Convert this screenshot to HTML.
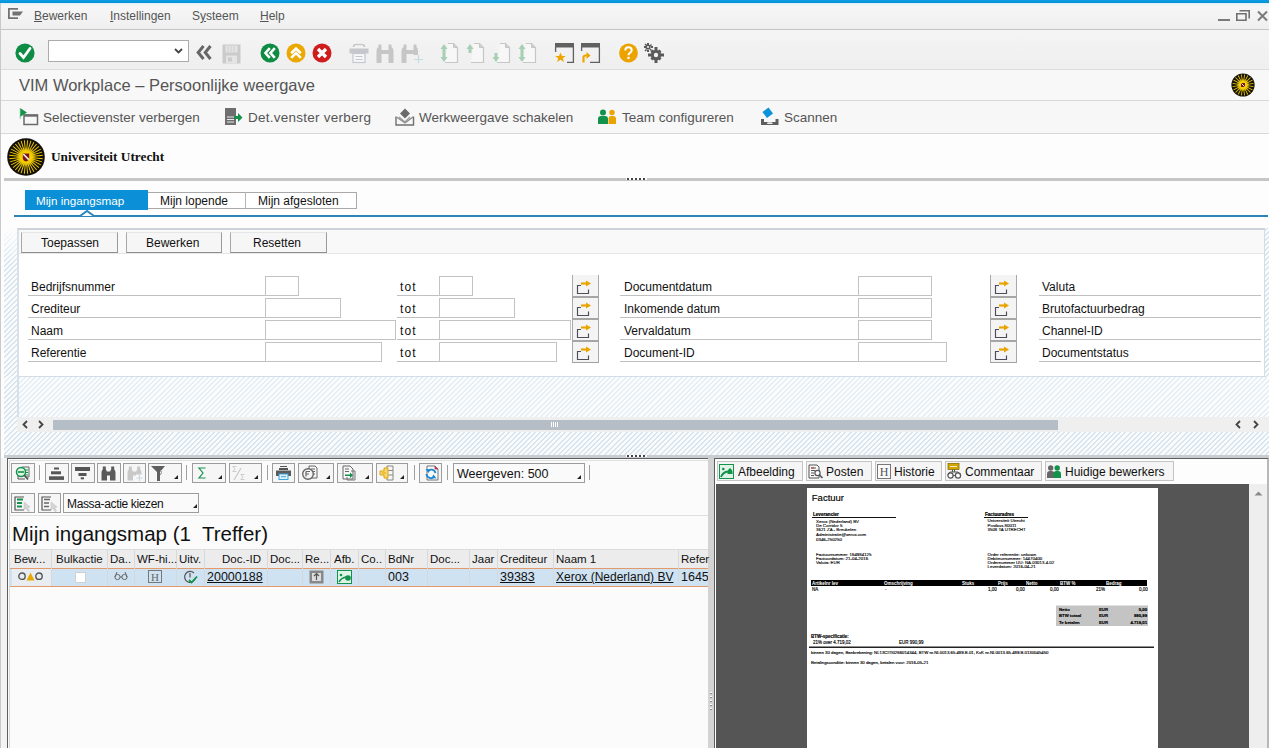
<!DOCTYPE html>
<html><head><meta charset="utf-8">
<style>
*{margin:0;padding:0;box-sizing:border-box}
html,body{width:1269px;height:748px;overflow:hidden;background:#f2f2f2;font-family:"Liberation Sans",sans-serif;font-size:12px;color:#222}
.a{position:absolute}
.hatch{background-color:#f6f9fb;background-image:repeating-linear-gradient(-45deg,#f9fbfd 0px,#f9fbfd 2.2px,#d8e5ee 2.2px,#d8e5ee 3.6px)}
.t{position:absolute;white-space:nowrap;line-height:1}
.btn{position:absolute;background:#f6f6f6;border:1px solid #a8a8a8;border-top-color:#e6e6e6;border-right-color:#9a9a9a;border-bottom-color:#8f8f8f}
.inp{position:absolute;background:#fff;border:1px solid #c3c3c3}
.ul{position:absolute;height:1px;background:#c0c0c0}
.vbtn{position:absolute;background:#f3f3f3;border:1px solid #cdcdcd;border-bottom-color:#a0a0a0;border-right-color:#a0a0a0;width:26px;height:20px}
.tb{position:absolute;background:#f6f6f6;border:1px solid #9c9c9c;height:20px}
.sep{position:absolute;width:1px;background:#a0a0a0}
svg{position:absolute;overflow:visible}
</style></head>
<body>
<!-- left border -->
<div class="a" style="left:0;top:0;width:1px;height:748px;background:#c9c9c9"></div>
<!-- blue top bar -->
<div class="a" style="left:0;top:0;width:1269px;height:3px;background:linear-gradient(#0a9ae2 0,#0a9ae2 2px,#0683c0 3px)"></div><div class="a" style="left:1px;top:3px;width:1268px;height:1px;background:#dff3f8"></div>
<!-- menu bar -->
<div class="a" style="left:1px;top:3px;width:1268px;height:27px;background:linear-gradient(#dff3f8 0,#dff3f8 1px,#f3f6f6 2px,#f6f6f6 4px,#f3f3f3 14px,#efefef 100%);border-bottom:1px solid #c4c4c4"></div>
<!-- toolbar -->
<div class="a" style="left:1px;top:30px;width:1268px;height:40px;background:linear-gradient(#f4f4f4,#efefef);border-bottom:1px solid #dcdcdc"></div>
<!-- title bar -->
<div class="a" style="left:1px;top:70px;width:1268px;height:31px;background:#f8f8f8;border-bottom:1px solid #d8d8d8"></div>
<!-- app toolbar -->
<div class="a" style="left:1px;top:101px;width:1268px;height:33px;background:#f7f7f7;border-bottom:1px solid #d8d8d8"></div>
<!-- content area -->
<div class="a" style="left:1px;top:134px;width:1268px;height:614px;background:#fdfdfd"></div>
<div class="a" style="left:4px;top:178px;width:1265px;height:3px;background:#c6c6c6"></div>

<!-- MENU -->
<svg style="left:8px;top:8px" width="16" height="12" viewBox="0 0 16 12"><path d="M10 0.9H0.9V10.1H10" stroke="#737373" stroke-width="1.8" fill="none"/><path d="M4.5 3.5H15L12 7.5H4.5Z" fill="#737373"/></svg>
<div class="t" style="left:34px;top:10px;font-size:12px;color:#555"><u>B</u>ewerken</div>
<div class="t" style="left:110px;top:10px;font-size:12px;color:#555"><u>I</u>nstellingen</div>
<div class="t" style="left:192px;top:10px;font-size:12px;color:#555">S<u>y</u>steem</div>
<div class="t" style="left:260px;top:10px;font-size:12px;color:#555"><u>H</u>elp</div>
<!-- window controls -->
<div class="a" style="left:1218px;top:19px;width:12px;height:2px;background:#7a7a7a"></div>
<svg style="left:1236px;top:10px" width="14" height="11" viewBox="0 0 14 11"><path d="M0.8 3.8H10V10.2H0.8Z" stroke="#707070" stroke-width="1.6" fill="none"/><path d="M3.5 0.8H13.2V8.5" stroke="#707070" stroke-width="1.6" fill="none"/></svg>
<svg style="left:1257px;top:11px" width="11" height="10" viewBox="0 0 11 10"><path d="M1 0.5L10 9.5M10 0.5L1 9.5" stroke="#7a7a7a" stroke-width="2"/></svg>

<!-- TOOLBAR -->
<svg style="left:15px;top:43px" width="20" height="20" viewBox="0 0 20 20"><circle cx="10" cy="10" r="9.6" fill="#0d8c43"/><path d="M5 10.5L8.5 14.5L15 5.5" stroke="#fff" stroke-width="2.8" fill="none" stroke-linecap="round"/></svg>
<div class="a" style="left:48px;top:40px;width:141px;height:22px;background:#fff;border:1px solid #ababab"></div>
<svg style="left:174px;top:48px" width="9" height="6" viewBox="0 0 9 6"><path d="M1 1L4.5 4.5L8 1" stroke="#444" stroke-width="1.8" fill="none"/></svg>
<svg style="left:196px;top:45px" width="16" height="15" viewBox="0 0 16 15"><path d="M7.5 1L2.2 7.5L7.5 14M14.5 1L9.2 7.5L14.5 14" stroke="#666" stroke-width="3" fill="none"/></svg>
<svg style="left:222px;top:44px" width="19" height="20" viewBox="0 0 19 20"><path d="M0.5 0.5H18.5V19.5H0.5Z" fill="#cbcbcb"/><rect x="3.5" y="1.5" width="12" height="7" fill="#e4e4e4"/><path d="M6 2V8M9 2V8M12 2V8" stroke="#cfcfcf" stroke-width="1"/><rect x="4" y="11.5" width="11" height="8" fill="#e4e4e4"/><rect x="6" y="13.5" width="4" height="4" fill="#cbcbcb"/></svg>
<svg style="left:260px;top:43px" width="20" height="20" viewBox="0 0 20 20"><circle cx="10" cy="10" r="9.5" fill="#0d8c43"/><path d="M9.8 5.2L5.5 10L9.8 14.8M14.8 5.2L10.5 10L14.8 14.8" stroke="#fff" stroke-width="2.6" fill="none"/></svg>
<svg style="left:286px;top:43px" width="20" height="20" viewBox="0 0 20 20"><circle cx="10" cy="10" r="9.5" fill="#eaa800"/><path d="M5.2 10.2L10 5.5L14.8 10.2M5.2 14.8L10 10L14.8 14.8" stroke="#fff" stroke-width="2.6" fill="none"/></svg>
<svg style="left:312px;top:43px" width="20" height="20" viewBox="0 0 20 20"><circle cx="10" cy="10" r="9.5" fill="#cf1c1c"/><path d="M6 6L14 14M14 6L6 14" stroke="#fff" stroke-width="3.3"/></svg>
<svg style="left:349px;top:43px" width="20" height="20" viewBox="0 0 20 20"><path d="M4.5 4Q4.5 1.5 7 1.5H13Q15.5 1.5 15.5 4" stroke="#c9c9c9" stroke-width="1.6" fill="none"/><rect x="0.5" y="5.5" width="19" height="5" fill="#c4c8cc"/><rect x="4" y="10.5" width="12" height="9" fill="#f4f8fa" stroke="#c4c8cc" stroke-width="1.2"/><path d="M6.5 13.5H13.5M6.5 16.5H13.5" stroke="#c4c8cc" stroke-width="1"/></svg>
<svg style="left:376px;top:43px" width="18" height="20" viewBox="0 0 18 20"><path d="M2.5 1.5H5.5V20H0.5V8Q0.5 5 2.5 4Z M12.5 1.5H15.5V4Q17.5 5 17.5 8V20H12.5Z M5.5 7H12.5V11H5.5Z" fill="#c6c6c6"/></svg>
<svg style="left:401px;top:43px" width="22" height="20" viewBox="0 0 22 20"><path d="M2.5 1.5H5.5V20H0.5V8Q0.5 5 2.5 4Z M12.5 1.5H15.5V4Q17 5 17 8V12H12.5Z M5.5 7H12.5V11H5.5Z" fill="#c6c6c6"/><path d="M17.5 12V20M13 16.5H22" stroke="#c5d9e0" stroke-width="1.2"/></svg>
<svg style="left:440px;top:43px" width="18" height="20" viewBox="0 0 18 20"><path d="M8 0.5H13.5L17.5 4.5V19.5H5" fill="#f7f7f7" stroke="#c6c6c6" stroke-width="1.2"/><path d="M13.5 0.5V4.5H17.5" fill="#d0d0d0" stroke="#c6c6c6"/><path d="M4 1L0.5 6H7.5Z" fill="#a6cfb3"/><path d="M4 5V10" stroke="#a6cfb3" stroke-width="3"/><path d="M4 19L0.5 14H7.5Z" fill="#a6cfb3"/><path d="M4 10V15" stroke="#a6cfb3" stroke-width="3"/></svg>
<svg style="left:466px;top:43px" width="18" height="20" viewBox="0 0 18 20"><path d="M8 0.5H13.5L17.5 4.5V19.5H5" fill="#f7f7f7" stroke="#c6c6c6" stroke-width="1.2"/><path d="M13.5 0.5V4.5H17.5" fill="#d0d0d0" stroke="#c6c6c6"/><path d="M4 1L0.5 6H7.5Z" fill="#a6cfb3"/><path d="M4 5V10" stroke="#a6cfb3" stroke-width="3"/></svg>
<svg style="left:492px;top:43px" width="18" height="20" viewBox="0 0 18 20"><path d="M8 0.5H13.5L17.5 4.5V19.5H5" fill="#f7f7f7" stroke="#c6c6c6" stroke-width="1.2"/><path d="M13.5 0.5V4.5H17.5" fill="#d0d0d0" stroke="#c6c6c6"/><path d="M4 19L0.5 14H7.5Z" fill="#a6cfb3"/><path d="M4 10V15" stroke="#a6cfb3" stroke-width="3"/></svg>
<svg style="left:518px;top:43px" width="18" height="20" viewBox="0 0 18 20"><path d="M8 0.5H13.5L17.5 4.5V19.5H5" fill="#f7f7f7" stroke="#c6c6c6" stroke-width="1.2"/><path d="M13.5 0.5V4.5H17.5" fill="#d0d0d0" stroke="#c6c6c6"/><path d="M4 1L0.5 6H7.5Z" fill="#a6cfb3"/><path d="M4 5V10" stroke="#a6cfb3" stroke-width="3"/><path d="M4 19L0.5 14H7.5Z" fill="#a6cfb3"/><path d="M4 10V15" stroke="#a6cfb3" stroke-width="3"/></svg>
<svg style="left:555px;top:43px" width="19" height="20" viewBox="0 0 19 20"><rect x="0" y="0" width="19" height="4.5" fill="#606060"/><path d="M0.6 4V9M18.4 4V19.4H12" stroke="#606060" stroke-width="1.3" fill="none"/><path d="M5.5 9.5L7 13H10.8L7.8 15.3L8.9 19L5.5 16.8L2.1 19L3.2 15.3L0.2 13H4Z" fill="#eda500"/></svg>
<svg style="left:581px;top:43px" width="19" height="20" viewBox="0 0 19 20"><rect x="0" y="0" width="19" height="4.5" fill="#606060"/><path d="M0.6 4V8M18.4 4V19.4H9" stroke="#606060" stroke-width="1.3" fill="none"/><path d="M2.5 19.5V14.5Q2.5 12.5 4.5 12.5H6" stroke="#eda500" stroke-width="2.2" fill="none"/><path d="M5.5 9L9.5 12.5L5.5 16Z" fill="#eda500"/></svg>
<svg style="left:619px;top:43px" width="19" height="20" viewBox="0 0 19 20"><circle cx="9.5" cy="10" r="9.4" fill="#eca300"/><path d="M6.3 7.5Q6.3 4.3 9.5 4.3Q12.7 4.3 12.7 7.3Q12.7 9 10.8 10Q9.5 10.8 9.5 12.3" stroke="#fff" stroke-width="2" fill="none"/><rect x="8.4" y="13.8" width="2.2" height="2.2" fill="#fff"/></svg>
<svg style="left:644px;top:43px" width="20" height="20" viewBox="0 0 20 20"><g fill="#5a5a5a"><path d="M3 0h2v2H3zM3 7h2v2H3zM0 3h2v2H0zM7 3h2v2H7zM0.5 1.5l1-1 1.5 1.5-1 1zM5.5 6.5l1-1 1.5 1.5-1 1zM0.5 7.5l1.5-1.5 1 1L1.5 8.5zM5.5 2.5L7 1l1 1-1.5 1.5z"/><circle cx="4" cy="4" r="2.6"/><path d="M10.5 4h3v3h-3zM10.5 17h3v3h-3zM4 10.5h3v3H4zM17 10.5h3v3h-3zM6.4 8.5l2.1-2.1 2 2-2.1 2.1zM15.4 17.5l2.1-2.1-2-2-2.1 2.1zM6.4 15.5l2-2 2.1 2.1-2 2zM15.4 6.4l2.1 2.1-2 2-2.1-2.1z"/><circle cx="12" cy="12" r="5.2"/></g><circle cx="12" cy="12" r="2.2" fill="#f1f1f1"/><circle cx="4" cy="4" r="1.1" fill="#f1f1f1"/></svg>

<!-- TITLE -->
<div class="t" style="left:19px;top:77px;font-size:16.5px;color:#555">VIM Workplace – Persoonlijke weergave</div>
<svg style="left:1231px;top:73px" width="24" height="24" viewBox="-12 -12 24 24"><defs><radialGradient id="g2"><stop offset="0" stop-color="#ffe000"/><stop offset="0.6" stop-color="#f2cc00"/><stop offset="1" stop-color="#f2cc00" stop-opacity="0"/></radialGradient></defs><circle r="11.6" fill="#17140a"/><path d="M3.00 0.08L2.88 0.85L10.39 2.10L10.53 1.21ZM2.83 1.00L2.47 1.70L9.23 5.21L9.64 4.41ZM2.38 1.83L1.83 2.38L7.17 7.81L7.81 7.17ZM1.70 2.47L1.00 2.83L4.41 9.64L5.21 9.23ZM0.85 2.88L0.08 3.00L1.21 10.53L2.10 10.39ZM-0.08 3.00L-0.85 2.88L-2.10 10.39L-1.21 10.53ZM-1.00 2.83L-1.70 2.47L-5.21 9.23L-4.41 9.64ZM-1.83 2.38L-2.38 1.83L-7.81 7.17L-7.17 7.81ZM-2.47 1.70L-2.83 1.00L-9.64 4.41L-9.23 5.21ZM-2.88 0.85L-3.00 0.08L-10.53 1.21L-10.39 2.10ZM-3.00 -0.08L-2.88 -0.85L-10.39 -2.10L-10.53 -1.21ZM-2.83 -1.00L-2.47 -1.70L-9.23 -5.21L-9.64 -4.41ZM-2.38 -1.83L-1.83 -2.38L-7.17 -7.81L-7.81 -7.17ZM-1.70 -2.47L-1.00 -2.83L-4.41 -9.64L-5.21 -9.23ZM-0.85 -2.88L-0.08 -3.00L-1.21 -10.53L-2.10 -10.39ZM0.08 -3.00L0.85 -2.88L2.10 -10.39L1.21 -10.53ZM1.00 -2.83L1.70 -2.47L5.21 -9.23L4.41 -9.64ZM1.83 -2.38L2.38 -1.83L7.81 -7.17L7.17 -7.81ZM2.47 -1.70L2.83 -1.00L9.64 -4.41L9.23 -5.21ZM2.88 -0.85L3.00 -0.08L10.53 -1.21L10.39 -2.10Z" fill="#ecc800"/><circle r="6.5" fill="url(#g2)"/><rect x="-2" y="-2" width="4" height="4" fill="#7a1422"/><path d="M-1.6 -1.6L1.6 1.6" stroke="#fff" stroke-width="0.9"/></svg>

<!-- APP TOOLBAR -->
<svg style="left:19px;top:107px" width="20" height="19" viewBox="0 0 20 19"><path d="M5 8H18.5V17.5H5Z" stroke="#6b6b6b" stroke-width="1.5" fill="none"/><path d="M5 8.6H18.5" stroke="#6b6b6b" stroke-width="2.2"/><path d="M1 1L8 5.5L1 10Z" fill="#12924a"/><path d="M1.2 1V12" stroke="#7fbf98" stroke-width="0.8"/></svg>
<div class="t" style="left:43px;top:111px;font-size:13.5px;color:#555">Selectievenster verbergen</div>
<svg style="left:224px;top:107px" width="19" height="19" viewBox="0 0 19 19"><rect x="1" y="1" width="11" height="17" fill="#6e6e6e"/><path d="M3 10H10M3 12.5H10M3 15H10" stroke="#e8e8e8" stroke-width="1"/><path d="M10 9H14V6L18.5 10.5L14 15V12H10Z" fill="#12924a"/></svg>
<div class="t" style="left:248px;top:111px;font-size:13.5px;letter-spacing:0.25px;color:#555">Det.venster verberg</div>
<svg style="left:395px;top:107px" width="20" height="19" viewBox="0 0 20 19"><path d="M1 9.5V18H18.5V9.5" fill="none" stroke="#707070" stroke-width="1.4"/><path d="M1.5 10L10 16L18 10" fill="none" stroke="#8a8a8a" stroke-width="1.3"/><path d="M4 10L10 15L15 10" fill="none" stroke="#9a9a9a" stroke-width="1.3"/><path d="M5 6.5L10 1.5L15 6.5L10 11.5Z" fill="#6a6a6a"/></svg>
<div class="t" style="left:419px;top:111px;font-size:13.5px;color:#555">Werkweergave schakelen</div>
<svg style="left:598px;top:109px" width="19" height="15" viewBox="0 0 19 15"><circle cx="5" cy="3.5" r="3" fill="#12924a"/><path d="M0 15V10Q0 7 3 7H7Q10 7 10 10V15Z" fill="#12924a"/><circle cx="14" cy="3.5" r="2.7" fill="#eaa300"/><path d="M10.5 15V10Q10.5 7 13 7H15Q18 7 18 10V15Z" fill="#eaa300"/></svg>
<div class="t" style="left:622px;top:111px;font-size:13.5px;color:#555">Team configureren</div>
<svg style="left:760px;top:107px" width="20" height="19" viewBox="0 0 20 19"><path d="M1 12V18H18.5V12H15.5V15H4V12Z" fill="#5e5e5e"/><ellipse cx="9.8" cy="16.2" rx="3" ry="0.9" fill="#eee"/><path d="M2.5 5L8.5 0.5L13 6.5L7 11Z" fill="#0a92da"/></svg>
<div class="t" style="left:784px;top:111px;font-size:13.5px;color:#555">Scannen</div>

<!-- LOGO -->
<svg style="left:7px;top:138px" width="38" height="38" viewBox="-19 -19 38 38"><defs><radialGradient id="g1"><stop offset="0" stop-color="#ffe000"/><stop offset="0.6" stop-color="#f2cc00"/><stop offset="1" stop-color="#f2cc00" stop-opacity="0"/></radialGradient></defs><circle r="18.8" fill="#14110a"/><path d="M5.00 0.00L4.90 0.97L16.66 2.14L16.76 1.15ZM4.90 0.98L4.62 1.91L15.92 5.35L16.21 4.40ZM4.62 1.92L4.16 2.78L14.57 8.36L15.05 7.48ZM4.16 2.78L3.54 3.53L12.66 11.04L13.30 10.27ZM3.53 3.54L2.78 4.16L10.27 13.30L11.04 12.66ZM2.78 4.16L1.92 4.62L7.48 15.05L8.36 14.57ZM1.91 4.62L0.98 4.90L4.40 16.21L5.35 15.92ZM0.97 4.90L0.00 5.00L1.15 16.76L2.14 16.66ZM-0.00 5.00L-0.97 4.90L-2.14 16.66L-1.15 16.76ZM-0.98 4.90L-1.91 4.62L-5.35 15.92L-4.40 16.21ZM-1.92 4.62L-2.78 4.16L-8.36 14.57L-7.48 15.05ZM-2.78 4.16L-3.53 3.54L-11.04 12.66L-10.27 13.30ZM-3.54 3.53L-4.16 2.78L-13.30 10.27L-12.66 11.04ZM-4.16 2.78L-4.62 1.92L-15.05 7.48L-14.57 8.36ZM-4.62 1.91L-4.90 0.98L-16.21 4.40L-15.92 5.35ZM-4.90 0.97L-5.00 0.00L-16.76 1.15L-16.66 2.14ZM-5.00 -0.00L-4.90 -0.97L-16.66 -2.14L-16.76 -1.15ZM-4.90 -0.98L-4.62 -1.91L-15.92 -5.35L-16.21 -4.40ZM-4.62 -1.92L-4.16 -2.78L-14.57 -8.36L-15.05 -7.48ZM-4.16 -2.78L-3.54 -3.53L-12.66 -11.04L-13.30 -10.27ZM-3.53 -3.54L-2.78 -4.16L-10.27 -13.30L-11.04 -12.66ZM-2.78 -4.16L-1.92 -4.62L-7.48 -15.05L-8.36 -14.57ZM-1.91 -4.62L-0.98 -4.90L-4.40 -16.21L-5.35 -15.92ZM-0.97 -4.90L-0.00 -5.00L-1.15 -16.76L-2.14 -16.66ZM0.00 -5.00L0.97 -4.90L2.14 -16.66L1.15 -16.76ZM0.98 -4.90L1.91 -4.62L5.35 -15.92L4.40 -16.21ZM1.92 -4.62L2.78 -4.16L8.36 -14.57L7.48 -15.05ZM2.78 -4.16L3.53 -3.54L11.04 -12.66L10.27 -13.30ZM3.54 -3.53L4.16 -2.78L13.30 -10.27L12.66 -11.04ZM4.16 -2.78L4.62 -1.92L15.05 -7.48L14.57 -8.36ZM4.62 -1.91L4.90 -0.98L16.21 -4.40L15.92 -5.35ZM4.90 -0.97L5.00 -0.00L16.76 -1.15L16.66 -2.14Z" fill="#ecc800"/><circle r="10" fill="url(#g1)"/><path d="M-3.2 -3.6H3.2V0.8Q3.2 3.8 0 4.6Q-3.2 3.8 -3.2 0.8Z" fill="#7a1422"/><path d="M-2.8 -3L2.8 2.6" stroke="#f4f4f4" stroke-width="1.5"/></svg>
<div class="t" style="left:51px;top:150px;font-family:'Liberation Serif',serif;font-weight:bold;font-size:13.3px;color:#111">Universiteit Utrecht</div>

<!-- TABS -->
<div class="a" style="left:25px;top:190px;width:123px;height:20px;background:#0b8fd6"></div>
<div class="t" style="left:36px;top:194.5px;font-size:11.7px;color:#fff">Mijn ingangsmap</div>
<div class="a" style="left:148px;top:192px;width:209px;height:17px;background:#fff;border:1px solid #a9a9a9;border-left:none"></div>
<div class="a" style="left:245px;top:192px;width:1px;height:17px;background:#b5b5b5"></div>
<div class="t" style="left:160px;top:194.5px;color:#111">Mijn lopende</div>
<div class="t" style="left:258px;top:194.5px;color:#111">Mijn afgesloten</div>
<div class="a" style="left:14px;top:215px;width:1254px;height:2px;background:#2a84b6"></div>
<svg style="left:80px;top:210px" width="14" height="7" viewBox="0 0 14 7"><path d="M0 6L7 1L14 6" fill="#fdfdfd" stroke="#2a86b9" stroke-width="2"/></svg>

<!-- HATCH around selection box -->
<div class="a hatch" style="left:4px;top:228px;width:13px;height:228px"></div>
<div class="a hatch" style="left:4px;top:376px;width:1265px;height:80px"></div>
<div class="a" style="left:19px;top:377px;width:1250px;height:40px;background:rgba(255,255,255,0.35)"></div>
<div class="a" style="left:17px;top:376px;width:2px;height:41px;background:#d8e1e8"></div>
<div class="a" style="left:4px;top:228px;width:13px;height:36px;background:linear-gradient(rgba(253,253,253,0.95),rgba(253,253,253,0))"></div>
<div class="a hatch" style="left:1265px;top:228px;width:4px;height:150px"></div>
<!-- selection box -->
<div class="a" style="left:17px;top:228px;width:1248px;height:149px;background:#fff;border:1px solid #d4dde5;border-left:2px solid #d8e1e8;border-top:2px solid #cdd3d8"></div>
<div class="a" style="left:19px;top:230px;width:1245px;height:24px;background:#f9f9f9;border-bottom:1px solid #e6e6e6"></div>
<!-- buttons -->
<div class="btn" style="left:21px;top:232px;width:97px;height:21px"></div>
<div class="t" style="left:41px;top:237px;color:#111">Toepassen</div>
<div class="btn" style="left:126px;top:232px;width:96px;height:21px"></div>
<div class="t" style="left:146px;top:237px;color:#111">Bewerken</div>
<div class="btn" style="left:230px;top:232px;width:97px;height:21px"></div>
<div class="t" style="left:253px;top:237px;color:#111">Resetten</div>

<div class="ul" style="left:28px;top:295px;width:237px"></div>
<div class="t" style="left:31px;top:281px;color:#111">Bedrijfsnummer</div>
<div class="inp" style="left:265px;top:276px;width:34px;height:20px"></div>
<div class="ul" style="left:397px;top:295px;width:42px"></div>
<div class="t" style="left:400px;top:281px;color:#111;letter-spacing:1.1px">tot</div>
<div class="inp" style="left:439px;top:276px;width:34px;height:20px"></div>
<div class="a" style="left:572px;top:275px;width:27px;height:88px;background:#f4f4f4;border-left:1px solid #a9a9a9;border-right:1px solid #a9a9a9;border-bottom:1px solid #a0a0a0"></div><svg style="left:576px;top:280px" width="16" height="15" viewBox="0 0 16 15"><path d="M5 5.5H1.5V13.5H12.5V9.5" stroke="#4d4d5c" stroke-width="1.15" fill="none"/><path d="M5 3.5H11" stroke="#e9a400" stroke-width="2.2"/><path d="M10 0.5L15 3.5L10 6.5Z" fill="#e9a400"/></svg>
<div class="ul" style="left:620px;top:295px;width:238px"></div>
<div class="t" style="left:624px;top:281px;color:#111">Documentdatum</div>
<div class="inp" style="left:858px;top:276px;width:74px;height:20px"></div>
<div class="a" style="left:990px;top:275px;width:27px;height:88px;background:#f4f4f4;border-left:1px solid #a9a9a9;border-right:1px solid #a9a9a9;border-bottom:1px solid #a0a0a0"></div><svg style="left:994px;top:280px" width="16" height="15" viewBox="0 0 16 15"><path d="M5 5.5H1.5V13.5H12.5V9.5" stroke="#4d4d5c" stroke-width="1.15" fill="none"/><path d="M5 3.5H11" stroke="#e9a400" stroke-width="2.2"/><path d="M10 0.5L15 3.5L10 6.5Z" fill="#e9a400"/></svg>
<div class="ul" style="left:1039px;top:295px;width:222px"></div>
<div class="t" style="left:1042px;top:281px;color:#111">Valuta</div>
<div class="ul" style="left:28px;top:317px;width:237px"></div>
<div class="t" style="left:31px;top:303px;color:#111">Crediteur</div>
<div class="inp" style="left:265px;top:298px;width:76px;height:20px"></div>
<div class="ul" style="left:397px;top:317px;width:42px"></div>
<div class="t" style="left:400px;top:303px;color:#111;letter-spacing:1.1px">tot</div>
<div class="inp" style="left:439px;top:298px;width:76px;height:20px"></div>
<div class="a" style="left:572px;top:296px;width:27px;height:2px;background:#a6a6a6"></div><svg style="left:576px;top:302px" width="16" height="15" viewBox="0 0 16 15"><path d="M5 5.5H1.5V13.5H12.5V9.5" stroke="#4d4d5c" stroke-width="1.15" fill="none"/><path d="M5 3.5H11" stroke="#e9a400" stroke-width="2.2"/><path d="M10 0.5L15 3.5L10 6.5Z" fill="#e9a400"/></svg>
<div class="ul" style="left:620px;top:317px;width:238px"></div>
<div class="t" style="left:624px;top:303px;color:#111">Inkomende datum</div>
<div class="inp" style="left:858px;top:298px;width:74px;height:20px"></div>
<div class="a" style="left:990px;top:296px;width:27px;height:2px;background:#a6a6a6"></div><svg style="left:994px;top:302px" width="16" height="15" viewBox="0 0 16 15"><path d="M5 5.5H1.5V13.5H12.5V9.5" stroke="#4d4d5c" stroke-width="1.15" fill="none"/><path d="M5 3.5H11" stroke="#e9a400" stroke-width="2.2"/><path d="M10 0.5L15 3.5L10 6.5Z" fill="#e9a400"/></svg>
<div class="ul" style="left:1039px;top:317px;width:222px"></div>
<div class="t" style="left:1042px;top:303px;color:#111">Brutofactuurbedrag</div>
<div class="ul" style="left:28px;top:339px;width:237px"></div>
<div class="t" style="left:31px;top:325px;color:#111">Naam</div>
<div class="inp" style="left:265px;top:320px;width:131px;height:20px"></div>
<div class="ul" style="left:397px;top:339px;width:42px"></div>
<div class="t" style="left:400px;top:325px;color:#111;letter-spacing:1.1px">tot</div>
<div class="inp" style="left:439px;top:320px;width:132px;height:20px"></div>
<div class="a" style="left:572px;top:318px;width:27px;height:2px;background:#a6a6a6"></div><svg style="left:576px;top:324px" width="16" height="15" viewBox="0 0 16 15"><path d="M5 5.5H1.5V13.5H12.5V9.5" stroke="#4d4d5c" stroke-width="1.15" fill="none"/><path d="M5 3.5H11" stroke="#e9a400" stroke-width="2.2"/><path d="M10 0.5L15 3.5L10 6.5Z" fill="#e9a400"/></svg>
<div class="ul" style="left:620px;top:339px;width:238px"></div>
<div class="t" style="left:624px;top:325px;color:#111">Vervaldatum</div>
<div class="inp" style="left:858px;top:320px;width:74px;height:20px"></div>
<div class="a" style="left:990px;top:318px;width:27px;height:2px;background:#a6a6a6"></div><svg style="left:994px;top:324px" width="16" height="15" viewBox="0 0 16 15"><path d="M5 5.5H1.5V13.5H12.5V9.5" stroke="#4d4d5c" stroke-width="1.15" fill="none"/><path d="M5 3.5H11" stroke="#e9a400" stroke-width="2.2"/><path d="M10 0.5L15 3.5L10 6.5Z" fill="#e9a400"/></svg>
<div class="ul" style="left:1039px;top:339px;width:222px"></div>
<div class="t" style="left:1042px;top:325px;color:#111">Channel-ID</div>
<div class="ul" style="left:28px;top:361px;width:237px"></div>
<div class="t" style="left:31px;top:347px;color:#111">Referentie</div>
<div class="inp" style="left:265px;top:342px;width:117px;height:20px"></div>
<div class="ul" style="left:397px;top:361px;width:42px"></div>
<div class="t" style="left:400px;top:347px;color:#111;letter-spacing:1.1px">tot</div>
<div class="inp" style="left:439px;top:342px;width:118px;height:20px"></div>
<div class="a" style="left:572px;top:340px;width:27px;height:2px;background:#a6a6a6"></div><svg style="left:576px;top:346px" width="16" height="15" viewBox="0 0 16 15"><path d="M5 5.5H1.5V13.5H12.5V9.5" stroke="#4d4d5c" stroke-width="1.15" fill="none"/><path d="M5 3.5H11" stroke="#e9a400" stroke-width="2.2"/><path d="M10 0.5L15 3.5L10 6.5Z" fill="#e9a400"/></svg>
<div class="ul" style="left:620px;top:361px;width:238px"></div>
<div class="t" style="left:624px;top:347px;color:#111">Document-ID</div>
<div class="inp" style="left:858px;top:342px;width:89px;height:20px"></div>
<div class="a" style="left:990px;top:340px;width:27px;height:2px;background:#a6a6a6"></div><svg style="left:994px;top:346px" width="16" height="15" viewBox="0 0 16 15"><path d="M5 5.5H1.5V13.5H12.5V9.5" stroke="#4d4d5c" stroke-width="1.15" fill="none"/><path d="M5 3.5H11" stroke="#e9a400" stroke-width="2.2"/><path d="M10 0.5L15 3.5L10 6.5Z" fill="#e9a400"/></svg>
<div class="ul" style="left:1039px;top:361px;width:222px"></div>
<div class="t" style="left:1042px;top:347px;color:#111">Documentstatus</div>
<div class="a" style="left:17px;top:417px;width:1252px;height:15px;background:#efefef"></div>
<div class="a" style="left:53px;top:420px;width:1005px;height:10px;background:#b5bdc6"></div>
<svg style="left:21px;top:420px" width="30" height="9" viewBox="0 0 30 9"><path d="M6 1L2.5 4.5L6 8M18 1L21.5 4.5L18 8" stroke="#444" stroke-width="1.8" fill="none"/></svg>
<svg style="left:1234px;top:420px" width="30" height="9" viewBox="0 0 30 9"><path d="M6 1L2.5 4.5L6 8M20 1L23.5 4.5L20 8" stroke="#444" stroke-width="1.8" fill="none"/></svg>
<div class="a" style="left:551px;top:422px;width:7px;height:5px;background-image:repeating-linear-gradient(90deg,#fff 0 1px,transparent 1px 2px)"></div>
<div class="a" style="left:4px;top:455px;width:1265px;height:3px;background:#c9cdd2"></div>
<div class="a" style="left:1px;top:458px;width:6px;height:290px;background:#f3f3f3"></div>
<div class="a" style="left:7px;top:458px;width:702px;height:290px;background:#fbfbfb;border-left:1px solid #5e5e5e;border-top:1px solid #5e5e5e"></div>
<div class="a" style="left:9px;top:460px;width:700px;height:288px;border-left:1px solid #d8d8d8;border-top:1px solid #e2e2e2"></div>
<div class="a" style="left:708px;top:458px;width:6px;height:290px;background:#d3d3d3"></div>
<div class="a" style="left:710px;top:692px;width:2px;height:20px;background-image:repeating-linear-gradient(180deg,#fff 0 1px,#888 1px 2px,transparent 2px 4px)"></div>
<div class="a" style="left:714px;top:458px;width:555px;height:290px;background:#fdfdfd;border-left:1px solid #5e5e5e;border-top:1px solid #5e5e5e;border-right:2px solid #b8b8b8"></div>
<div class="a" style="left:626px;top:455px;width:21px;height:2px;background:#fff;background-image:repeating-linear-gradient(90deg,#fff 0 1px,#444 1px 3px,#fff 3px 4px)"></div>
<div class="a" style="left:626px;top:178px;width:21px;height:2px;background:#fff;background-image:repeating-linear-gradient(90deg,#fff 0 1px,#444 1px 3px,#fff 3px 4px)"></div>
<div class="tb" style="left:11px;top:463px;width:24px"></div>
<div class="tb" style="left:45px;top:463px;width:24px"></div>
<div class="tb" style="left:71px;top:463px;width:24px"></div>
<div class="tb" style="left:97px;top:463px;width:24px"></div>
<div class="tb" style="left:123px;top:463px;width:23px"></div>
<div class="tb" style="left:148px;top:463px;width:34px"></div>
<div class="tb" style="left:192px;top:463px;width:34px"></div>
<div class="tb" style="left:229px;top:463px;width:33px"></div>
<div class="tb" style="left:272px;top:463px;width:23px"></div>
<div class="tb" style="left:298px;top:463px;width:36px"></div>
<div class="tb" style="left:337px;top:463px;width:36px"></div>
<div class="tb" style="left:376px;top:463px;width:32px"></div>
<div class="tb" style="left:419px;top:463px;width:23px"></div>
<div class="sep" style="left:39px;top:465px;height:15px"></div>
<div class="sep" style="left:186px;top:465px;height:15px"></div>
<div class="sep" style="left:267px;top:465px;height:15px"></div>
<div class="sep" style="left:414px;top:465px;height:15px"></div>
<div class="sep" style="left:447px;top:465px;height:15px"></div>
<div class="sep" style="left:589px;top:465px;height:15px"></div>
<div class="tb" style="left:453px;top:463px;width:132px;background:#fafafa"></div>
<div class="t" style="left:457px;top:468px;font-size:12.5px;color:#111">Weergeven: 500</div>
<div class="tb" style="left:11px;top:493px;width:24px"></div>
<div class="tb" style="left:38px;top:493px;width:23px"></div>
<div class="tb" style="left:63px;top:493px;width:136px;background:#fafafa"></div>
<div class="t" style="left:67px;top:498px;font-size:12px;letter-spacing:-0.35px;color:#111">Massa-actie kiezen</div>
<svg style="left:174px;top:475px" width="4" height="4" viewBox="0 0 4 4"><path d="M4 0V4H0Z" fill="#222"/></svg>
<svg style="left:218px;top:475px" width="4" height="4" viewBox="0 0 4 4"><path d="M4 0V4H0Z" fill="#222"/></svg>
<svg style="left:254px;top:475px" width="4" height="4" viewBox="0 0 4 4"><path d="M4 0V4H0Z" fill="#222"/></svg>
<svg style="left:326px;top:475px" width="4" height="4" viewBox="0 0 4 4"><path d="M4 0V4H0Z" fill="#222"/></svg>
<svg style="left:365px;top:475px" width="4" height="4" viewBox="0 0 4 4"><path d="M4 0V4H0Z" fill="#222"/></svg>
<svg style="left:400px;top:475px" width="4" height="4" viewBox="0 0 4 4"><path d="M4 0V4H0Z" fill="#222"/></svg>
<svg style="left:577px;top:475px" width="4" height="4" viewBox="0 0 4 4"><path d="M4 0V4H0Z" fill="#222"/></svg>
<svg style="left:193px;top:504px" width="4" height="4" viewBox="0 0 4 4"><path d="M4 0V4H0Z" fill="#222"/></svg>
<div class="a" style="left:9px;top:515px;width:699px;height:1px;background:#e0e0e0"></div>
<div class="t" style="left:12px;top:523.5px;font-size:20.5px;color:#111">Mijn ingangsmap (1&nbsp; Treffer)</div>
<div class="a" style="left:10px;top:549px;width:698px;height:19px;background:#ececec;border-top:1px solid #dcdcdc"></div>
<div class="a" style="left:10px;top:568px;width:698px;height:19px;background:#cfe2f1;border-top:1px solid #e39a6b;border-bottom:1px solid #e39a6b"></div>
<div class="a" style="left:12px;top:569px;width:39px;height:17px;background:#e8edf2"></div>
<div class="a" style="left:51px;top:550px;width:1px;height:36px;background:#d5d9dd"></div>
<div class="a" style="left:107px;top:550px;width:1px;height:36px;background:#d5d9dd"></div>
<div class="a" style="left:134px;top:550px;width:1px;height:36px;background:#d5d9dd"></div>
<div class="a" style="left:176px;top:550px;width:1px;height:36px;background:#d5d9dd"></div>
<div class="a" style="left:204px;top:550px;width:1px;height:36px;background:#d5d9dd"></div>
<div class="a" style="left:267px;top:550px;width:1px;height:36px;background:#d5d9dd"></div>
<div class="a" style="left:302px;top:550px;width:1px;height:36px;background:#d5d9dd"></div>
<div class="a" style="left:330px;top:550px;width:1px;height:36px;background:#d5d9dd"></div>
<div class="a" style="left:358px;top:550px;width:1px;height:36px;background:#d5d9dd"></div>
<div class="a" style="left:385px;top:550px;width:1px;height:36px;background:#d5d9dd"></div>
<div class="a" style="left:427px;top:550px;width:1px;height:36px;background:#d5d9dd"></div>
<div class="a" style="left:469px;top:550px;width:1px;height:36px;background:#d5d9dd"></div>
<div class="a" style="left:497px;top:550px;width:1px;height:36px;background:#d5d9dd"></div>
<div class="a" style="left:553px;top:550px;width:1px;height:36px;background:#d5d9dd"></div>
<div class="a" style="left:678px;top:550px;width:1px;height:36px;background:#d5d9dd"></div>
<div class="t" style="left:14px;top:554px;font-size:11.5px;color:#111">Bew...</div>
<div class="t" style="left:56px;top:554px;font-size:11.5px;color:#111">Bulkactie</div>
<div class="t" style="left:110px;top:554px;font-size:11.5px;color:#111">Da..</div>
<div class="t" style="left:137px;top:554px;font-size:11.5px;color:#111">WF-hi...</div>
<div class="t" style="left:179px;top:554px;font-size:11.5px;color:#111">Uitv.</div>
<div class="t" style="left:222px;top:554px;font-size:11.5px;color:#111">Doc.-ID</div>
<div class="t" style="left:270px;top:554px;font-size:11.5px;color:#111">Doc...</div>
<div class="t" style="left:305px;top:554px;font-size:11.5px;color:#111">Re...</div>
<div class="t" style="left:334px;top:554px;font-size:11.5px;color:#111">Afb.</div>
<div class="t" style="left:361px;top:554px;font-size:11.5px;color:#111">Co..</div>
<div class="t" style="left:388px;top:554px;font-size:11.5px;color:#111">BdNr</div>
<div class="t" style="left:430px;top:554px;font-size:11.5px;color:#111">Doc...</div>
<div class="t" style="left:472px;top:554px;font-size:11.5px;color:#111">Jaar</div>
<div class="t" style="left:500px;top:554px;font-size:11.5px;color:#111">Crediteur</div>
<div class="t" style="left:556px;top:554px;font-size:11.5px;color:#111">Naam 1</div>
<div class="t" style="left:681px;top:554px;font-size:11.5px;color:#111">Refer</div>
<div class="t" style="left:207px;top:571px;font-size:12.5px;color:#111;text-decoration:underline">20000188</div>
<div class="t" style="left:388px;top:571px;font-size:12.5px;color:#111">003</div>
<div class="t" style="left:500px;top:571px;font-size:12.5px;color:#111;text-decoration:underline">39383</div>
<div class="t" style="left:556px;top:571px;font-size:12px;color:#111;text-decoration:underline">Xerox (Nederland) BV</div>
<div class="a" style="left:679px;top:569px;width:29px;height:17px;overflow:hidden"><div class="t" style="left:2px;top:2px;font-size:12.5px;color:#111">16456</div></div>
<svg style="left:18px;top:572px" width="26" height="9" viewBox="0 0 26 9"><circle cx="4" cy="4.2" r="3.2" fill="none" stroke="#555" stroke-width="1.4"/><path d="M8.5 8.5L12.5 0.5L16.5 8.5Z" fill="#e8a800"/><circle cx="21" cy="4.2" r="3.2" fill="none" stroke="#555" stroke-width="1.4"/></svg>
<div class="a" style="left:75px;top:572px;width:11px;height:11px;background:#fff;border:1px solid #d0d0d0"></div>
<svg style="left:114px;top:571px" width="14" height="10" viewBox="0 0 14 10"><circle cx="3.5" cy="6" r="2.6" fill="none" stroke="#666" stroke-width="1"/><circle cx="10.5" cy="6" r="2.6" fill="none" stroke="#666" stroke-width="1"/><path d="M6 6H8M1 6L3 1M13 6L11 1" stroke="#666" stroke-width="1" fill="none"/></svg>
<svg style="left:148px;top:570px" width="14" height="13" viewBox="0 0 14 13"><rect x="0.5" y="0.5" width="13" height="12" fill="none" stroke="#777"/><text x="7" y="10.5" font-family="Liberation Serif" font-size="11" fill="#666" text-anchor="middle">H</text></svg>
<svg style="left:183px;top:570px" width="15" height="14" viewBox="0 0 15 14"><path d="M11 3A5.5 5.5 0 1 0 12.5 8" fill="none" stroke="#555" stroke-width="1.2"/><path d="M7 3V7.5" stroke="#555" stroke-width="1.2"/><path d="M6 10L8.5 12.5L14 6.5" stroke="#12924a" stroke-width="1.8" fill="none"/></svg>
<svg style="left:309px;top:570px" width="15" height="14" viewBox="0 0 15 14"><rect x="0.5" y="0.5" width="14" height="13" fill="#888"/><rect x="3" y="3" width="9" height="8" fill="#ddd"/><path d="M7.5 4V10M5 6L7.5 3.5L10 6" stroke="#555" stroke-width="1.2" fill="none"/></svg>
<svg style="left:337px;top:570px" width="15" height="14" viewBox="0 0 15 14"><rect x="0.5" y="0.5" width="14" height="13" fill="#dff3e6" stroke="#12924a"/><circle cx="4" cy="5" r="1.3" fill="#12924a"/><path d="M2 12Q4 8 9 7" stroke="#12924a" stroke-width="1.6" fill="none"/><circle cx="11" cy="8" r="2.8" fill="#12924a"/></svg>
<div class="tb" style="left:717px;top:461px;width:86px;background:#f5f5f5;border-color:#c4c4c4"></div>
<div class="t" style="left:738px;top:466px;font-size:12px;color:#111">Afbeelding</div>
<div class="tb" style="left:806px;top:461px;width:66px;background:#f5f5f5;border-color:#c4c4c4"></div>
<div class="t" style="left:826px;top:466px;font-size:12px;color:#111">Posten</div>
<div class="tb" style="left:875px;top:461px;width:67px;background:#f5f5f5;border-color:#c4c4c4"></div>
<div class="t" style="left:894px;top:466px;font-size:12px;color:#111">Historie</div>
<div class="tb" style="left:945px;top:461px;width:97px;background:#f5f5f5;border-color:#c4c4c4"></div>
<div class="t" style="left:965px;top:466px;font-size:12px;color:#111">Commentaar</div>
<div class="tb" style="left:1045px;top:461px;width:129px;background:#f5f5f5;border-color:#c4c4c4"></div>
<div class="t" style="left:1065px;top:466px;font-size:12px;color:#111">Huidige bewerkers</div>
<div class="a" style="left:716px;top:484px;width:533px;height:264px;background:#555"></div>
<div class="a" style="left:1249px;top:484px;width:18px;height:264px;background:#eeeeee"></div>
<svg style="left:1254px;top:490px" width="9" height="6" viewBox="0 0 9 6"><path d="M0.5 5.5L4.5 1.5L8.5 5.5Z" fill="#8a8a8a"/></svg>
<div class="a" style="left:807px;top:488px;width:351px;height:260px;background:#fff"></div>
<svg style="left:15px;top:465px" width="16" height="16" viewBox="0 0 16 16"><path d="M7 2H14V12H10" fill="#e8f6ec" stroke="#666" stroke-width="1"/><path d="M9 5H13M9 7.5H13M9 10H13" stroke="#12924a" stroke-width="1.2"/><circle cx="6" cy="7" r="4.5" fill="#dff3e6" stroke="#12924a" stroke-width="1.5"/><path d="M3 7H9" stroke="#12924a" stroke-width="1.6"/><path d="M3 11V14H10" stroke="#555" stroke-width="1" fill="none"/><path d="M9 10L13 14.5" stroke="#555" stroke-width="1.8"/></svg>
<svg style="left:49px;top:467px" width="15" height="13" viewBox="0 0 15 13"><rect x="5" y="0.5" width="5" height="2" fill="#555"/><rect x="2" y="4.3" width="10" height="3" fill="#555"/><rect x="0" y="9.3" width="15" height="3.6" fill="#555"/></svg>
<svg style="left:75px;top:467px" width="15" height="13" viewBox="0 0 15 13"><rect x="0" y="0" width="15" height="4" fill="#555"/><rect x="3.5" y="6" width="8" height="3" fill="#555"/><rect x="5.7" y="10.3" width="3.3" height="2" fill="#555"/></svg>
<svg style="left:101px;top:466px" width="15" height="15" viewBox="0 0 15 15"><path d="M1.8 0.5H4.8V3.5Q6 4.5 6 6.5V14.5H0.5V6.5Q0.5 4.5 1.8 3.5Z M10.2 0.5H13.2V3.5Q14.5 4.5 14.5 6.5V14.5H9V6.5Q9 4.5 10.2 3.5Z M6 5.5H9V9.5H6Z" fill="#5a5a5a"/></svg>
<svg style="left:127px;top:466px" width="16" height="15" viewBox="0 0 16 15"><path d="M1.8 0.5H4.8V3.5Q6 4.5 6 6.5V14.5H0.5V6.5Q0.5 4.5 1.8 3.5Z M10.2 0.5H13.2V3.5Q14.5 4.5 14.5 6.5V8.5H9V6.5Q9 4.5 10.2 3.5Z M6 5.5H9V9.5H6Z" fill="#c8c8c8"/><path d="M12.5 9V15M9.5 12H15.5" stroke="#c6d6dc" stroke-width="1"/></svg>
<svg style="left:151px;top:466px" width="15" height="15" viewBox="0 0 15 15"><path d="M0 0H14L9 6V15H6V6Z" fill="#5f5f5f"/><path d="M9 9A3 3 0 0 0 9 4" fill="none" stroke="#888" stroke-width="1"/></svg>
<svg style="left:198px;top:467px" width="8" height="12" viewBox="0 0 8 12"><path d="M7.5 1H1L5 6L1 11H7.5" fill="none" stroke="#12924a" stroke-width="1.2"/></svg>
<svg style="left:232px;top:466px" width="14" height="15" viewBox="0 0 14 15"><path d="M4.5 0.5H0.8L3 3L0.8 5.5H4.5" fill="none" stroke="#c8c8c8" stroke-width="0.9"/><path d="M2 14L9 2" stroke="#c8c8c8" stroke-width="1.2"/><path d="M12.5 8.5H8.8L11 11L8.8 13.5H12.5" fill="none" stroke="#c8c8c8" stroke-width="0.9"/></svg>
<svg style="left:276px;top:466px" width="15" height="14" viewBox="0 0 15 14"><path d="M4 0.5H11" stroke="#555" stroke-width="1"/><path d="M3 2H12V4H3Z" fill="#555"/><path d="M0 4.5H15V10H0Z" fill="#5a5a5a"/><rect x="3" y="8" width="9" height="5.5" fill="#e0f2fb" stroke="#3ea3d8" stroke-width="1"/><path d="M5 10.7H10" stroke="#3ea3d8"/></svg>
<svg style="left:302px;top:465px" width="16" height="16" viewBox="0 0 16 16"><path d="M7 1H13L15 3V13H7Z" fill="#f5f5f5" stroke="#666" stroke-width="1"/><path d="M9 4H13M9 6.5H13M9 9H13" stroke="#666" stroke-width="1"/><circle cx="6" cy="9" r="5.3" fill="#f5f5f5" stroke="#666" stroke-width="1.4"/><path d="M4 6.5V11.5M4 6.5H8M4 9H7" stroke="#666" stroke-width="1.2" fill="none"/></svg>
<svg style="left:342px;top:465px" width="16" height="16" viewBox="0 0 16 16"><path d="M1 1H8L11 4V14H1Z" fill="#f7f7f7" stroke="#666" stroke-width="1"/><path d="M3 4H7M3 6.5H7" stroke="#666"/><path d="M9 6H13V15H5V12" fill="none" stroke="#777" stroke-width="1"/><path d="M3 9.5H8V7.5L11 10.3L8 13V11H3Z" fill="#12924a"/></svg>
<svg style="left:379px;top:465px" width="15" height="16" viewBox="0 0 15 16"><path d="M8 1V15M8 1H14M8 5.5H14M8 10H14M8 15H14" stroke="#888" stroke-width="1" fill="none"/><path d="M14 1V15" stroke="#888"/><path d="M1 6H5V3H9V13H5V10H1Z" fill="#f5d57a" stroke="#e0a800" stroke-width="1"/><path d="M3 8H7" stroke="#e0a800"/></svg>
<svg style="left:424px;top:465px" width="15" height="16" viewBox="0 0 15 16"><path d="M3 1H11L14 4V15H3Z" fill="#f9f9f9" stroke="#777" stroke-width="1"/><path d="M11 1V4H14" fill="#c04070" stroke="#a34" stroke-width="0.8"/><path d="M11.5 8A4.5 4.5 0 0 0 3.5 6.5M2.5 9A4.5 4.5 0 0 0 10.5 11.5" fill="none" stroke="#1b86d3" stroke-width="1.8"/><path d="M1.5 4L4.5 8L6.5 4.5Z M12.5 13.5L9.5 9.5L7.5 13Z" fill="#1b86d3"/></svg>
<svg style="left:14px;top:496px" width="17" height="16" viewBox="0 0 17 16"><path d="M10 1H1V14H10" fill="none" stroke="#555" stroke-width="1.2"/><path d="M3 3.5H9M3 7H8M3 10.5H8" stroke="#12924a" stroke-width="1.8"/><path d="M10 6L10 14L12 12L14 15.5L15.5 14.8L13.5 11.5L16 11Z" fill="#d6d6d6" stroke="#bbb" stroke-width="0.5"/></svg>
<svg style="left:41px;top:496px" width="17" height="16" viewBox="0 0 17 16"><path d="M10 1H1V14H10" fill="none" stroke="#555" stroke-width="1.2"/><path d="M3 3.5H9M3 7H8M3 10.5H8" stroke="#666" stroke-width="1.6"/><path d="M10 6L10 14L12 12L14 15.5L15.5 14.8L13.5 11.5L16 11Z" fill="#d6d6d6" stroke="#bbb" stroke-width="0.5"/></svg>
<svg style="left:719px;top:464px" width="15" height="15" viewBox="0 0 15 15"><rect x="0.5" y="0.5" width="14" height="14" fill="#dff3e6" stroke="#12924a"/><circle cx="4.3" cy="5" r="1.3" fill="#12924a"/><path d="M2 13Q4 8 9 7.5" stroke="#12924a" stroke-width="1.8" fill="none"/><path d="M11 4Q14 6 13.5 10H8.5Q8 6 11 4Z" fill="#12924a"/></svg>
<svg style="left:808px;top:464px" width="15" height="15" viewBox="0 0 15 15"><path d="M1 1H9L11 3V14H1Z" fill="#f8f8f8" stroke="#555" stroke-width="1"/><path d="M3 4H8M3 6.5H7M3 9H6M3 11.5H6" stroke="#555"/><path d="M3 4H6" stroke="#c33"/><circle cx="9.5" cy="9" r="2.6" fill="#fff" stroke="#555" stroke-width="1.2"/><path d="M11.3 10.8L14.5 14" stroke="#555" stroke-width="1.6"/></svg>
<svg style="left:877px;top:464px" width="14" height="15" viewBox="0 0 14 15"><rect x="0.5" y="0.5" width="13" height="14" fill="#fafafa" stroke="#777"/><text x="7" y="12" font-family="Liberation Serif" font-size="12" fill="#555" text-anchor="middle">H</text></svg>
<svg style="left:947px;top:463px" width="15" height="17" viewBox="0 0 15 17"><rect x="1" y="0.5" width="11" height="6" fill="#d4a400" stroke="#8a7000" stroke-width="0.8"/><path d="M3 3.5H10" stroke="#fff" stroke-width="0.8"/><path d="M5.5 6.5V9M7.5 6.5V9" stroke="#555"/><circle cx="3.5" cy="12.5" r="2.6" fill="#fff" stroke="#555" stroke-width="1.2"/><circle cx="11" cy="12.5" r="2.6" fill="#fff" stroke="#555" stroke-width="1.2"/><path d="M6 12.5H8.5M1 12L3 9H11L13.5 12" stroke="#555" stroke-width="1" fill="none"/></svg>
<svg style="left:1047px;top:465px" width="14" height="13" viewBox="0 0 14 13"><circle cx="3.7" cy="3" r="2.7" fill="#666"/><path d="M0 13V8.5Q0 6 3 6H4.5Q7.5 6 7.5 8.5V13Z" fill="#666"/><circle cx="10.2" cy="3" r="2.7" fill="#12924a"/><path d="M6.5 13V8.5Q6.5 6 9.5 6H11Q14 6 14 8.5V13Z" fill="#12924a"/></svg>
<div class="a" style="left:807px;top:488px;width:1404px;height:1080px;transform:scale(0.25);transform-origin:0 0;overflow:hidden"><div class="t" style="left:19.2px;top:19.8px;font-size:38.0px;color:#000;-webkit-text-stroke:0.6px #000;">Factuur</div>
<div class="t" style="left:24.0px;top:95.0px;font-size:18.4px;font-weight:bold;color:#000;-webkit-text-stroke:0.8px #000;">Leverancier</div>
<div class="a" style="left:20.0px;top:116.0px;width:336.0px;height:4.0px;background:#111"></div>
<div class="t" style="left:712.0px;top:95.0px;font-size:18.4px;font-weight:bold;color:#000;-webkit-text-stroke:0.8px #000;">Factuuradres</div>
<div class="a" style="left:708.0px;top:116.0px;width:176.0px;height:4.0px;background:#111"></div>
<div class="t" style="left:36.0px;top:124.0px;font-size:17.6px;color:#000;-webkit-text-stroke:0.5px #000;">Xerox (Nederland) BV</div>
<div class="t" style="left:36.0px;top:143.0px;font-size:17.6px;color:#000;-webkit-text-stroke:0.5px #000;">De Corridor 5</div>
<div class="t" style="left:36.0px;top:159.2px;font-size:17.6px;color:#000;-webkit-text-stroke:0.5px #000;">3621 ZA - Breukelen</div>
<div class="t" style="left:36.0px;top:179.2px;font-size:17.6px;color:#000;-webkit-text-stroke:0.5px #000;">Administratie@xerox.com</div>
<div class="t" style="left:36.0px;top:198.0px;font-size:17.6px;color:#000;-webkit-text-stroke:0.5px #000;">0346-250250</div>
<div class="t" style="left:36.0px;top:258.0px;font-size:17.6px;color:#000;-webkit-text-stroke:0.5px #000;">Factuurnummer: 164984125</div>
<div class="t" style="left:36.0px;top:274.0px;font-size:17.6px;color:#000;-webkit-text-stroke:0.5px #000;">Factuurdatum: 21-04-2016</div>
<div class="t" style="left:36.0px;top:290.0px;font-size:17.6px;color:#000;-webkit-text-stroke:0.5px #000;">Valuta: EUR</div>
<div class="t" style="left:722.0px;top:122.0px;font-size:17.6px;color:#000;-webkit-text-stroke:0.5px #000;">Universiteit Utrecht</div>
<div class="t" style="left:722.0px;top:141.0px;font-size:17.6px;color:#000;-webkit-text-stroke:0.5px #000;">Postbus 80011</div>
<div class="t" style="left:722.0px;top:157.0px;font-size:17.6px;color:#000;-webkit-text-stroke:0.5px #000;">3508 TA UTRECHT</div>
<div class="t" style="left:722.0px;top:258.0px;font-size:17.6px;color:#000;-webkit-text-stroke:0.5px #000;">Order referentie: unkown</div>
<div class="t" style="left:722.0px;top:274.0px;font-size:17.6px;color:#000;-webkit-text-stroke:0.5px #000;">Debiteurnummer: 14470400</div>
<div class="t" style="left:722.0px;top:290.0px;font-size:17.6px;color:#000;-webkit-text-stroke:0.5px #000;">Ordernummer UU: NA.03013.4.02</div>
<div class="t" style="left:722.0px;top:306.0px;font-size:17.6px;color:#000;-webkit-text-stroke:0.5px #000;">Leverdatum: 2016-04-21</div>
<div class="a" style="left:16.0px;top:368.0px;width:1344.0px;height:24.0px;background:#000"></div>
<div class="t" style="left:20.0px;top:372.8px;font-size:18.0px;font-weight:bold;color:#fff;">Artikelnr lev</div>
<div class="t" style="left:308.0px;top:372.8px;font-size:18.0px;font-weight:bold;color:#fff;">Omschrijving</div>
<div class="t" style="left:620.0px;top:372.8px;font-size:18.0px;font-weight:bold;color:#fff;">Stuks</div>
<div class="t" style="left:764.0px;top:372.8px;font-size:18.0px;font-weight:bold;color:#fff;">Prijs</div>
<div class="t" style="left:876.0px;top:372.8px;font-size:18.0px;font-weight:bold;color:#fff;">Netto</div>
<div class="t" style="left:1012.0px;top:372.8px;font-size:18.0px;font-weight:bold;color:#fff;">BTW %</div>
<div class="t" style="left:1196.0px;top:372.8px;font-size:18.0px;font-weight:bold;color:#fff;">Bedrag</div>
<div class="t" style="left:20.0px;top:394.8px;font-size:18.0px;color:#000;-webkit-text-stroke:0.6px #000;">NA</div>
<div class="t" style="left:312.0px;top:394.8px;font-size:18.0px;color:#000;-webkit-text-stroke:0.6px #000;">-</div>
<div class="t" style="left:724.0px;top:394.8px;font-size:18.0px;color:#000;-webkit-text-stroke:0.6px #000;">1,00</div>
<div class="t" style="left:836.0px;top:394.8px;font-size:18.0px;color:#000;-webkit-text-stroke:0.6px #000;">0,00</div>
<div class="t" style="left:972.0px;top:394.8px;font-size:18.0px;color:#000;-webkit-text-stroke:0.6px #000;">0,00</div>
<div class="t" style="left:1156.0px;top:394.8px;font-size:18.0px;color:#000;-webkit-text-stroke:0.6px #000;">21%</div>
<div class="t" style="left:1328.0px;top:394.8px;font-size:18.0px;color:#000;-webkit-text-stroke:0.6px #000;">0,00</div>
<div class="a" style="left:996.0px;top:470.0px;width:368.0px;height:82.0px;background:#c4c4c4"></div>
<div class="t" style="left:1008.0px;top:475.6px;font-size:17.0px;font-weight:bold;color:#000;-webkit-text-stroke:0.6px #000;">Netto</div>
<div class="t" style="left:1168.0px;top:475.6px;font-size:17.0px;font-weight:bold;color:#000;-webkit-text-stroke:0.6px #000;">EUR</div>
<div class="t" style="right:44.0px;top:475.6px;font-size:17.0px;font-weight:bold;color:#000;-webkit-text-stroke:0.8px #000">0,00</div>
<div class="t" style="left:1008.0px;top:501.6px;font-size:17.0px;font-weight:bold;color:#000;-webkit-text-stroke:0.6px #000;">BTW totaal</div>
<div class="t" style="left:1168.0px;top:501.6px;font-size:17.0px;font-weight:bold;color:#000;-webkit-text-stroke:0.6px #000;">EUR</div>
<div class="t" style="right:44.0px;top:501.6px;font-size:17.0px;font-weight:bold;color:#000;-webkit-text-stroke:0.8px #000">990,99</div>
<div class="t" style="left:1008.0px;top:527.6px;font-size:17.0px;font-weight:bold;color:#000;-webkit-text-stroke:0.6px #000;">Te betalen</div>
<div class="t" style="left:1168.0px;top:527.6px;font-size:17.0px;font-weight:bold;color:#000;-webkit-text-stroke:0.6px #000;">EUR</div>
<div class="t" style="right:44.0px;top:527.6px;font-size:17.0px;font-weight:bold;color:#000;-webkit-text-stroke:0.8px #000">4.719,01</div>
<div class="t" style="left:16.0px;top:582.8px;font-size:18.0px;font-weight:bold;color:#000;-webkit-text-stroke:0.6px #000;">BTW-specificatie:</div>
<div class="t" style="left:24.0px;top:608.8px;font-size:18.0px;color:#000;-webkit-text-stroke:0.6px #000;">21% over 4.719,02</div>
<div class="t" style="left:368.0px;top:608.8px;font-size:18.0px;color:#000;-webkit-text-stroke:0.6px #000;">EUR 990,99</div>
<div class="a" style="left:8.0px;top:634.0px;width:1380.0px;height:6.0px;background:#222"></div>
<div class="t" style="left:16.0px;top:651.4px;font-size:17.2px;color:#000;-webkit-text-stroke:0.6px #000;">binnen 30 dagen, Bankrekening: NL13CITI0266014344, BTW nr.NL0013.65.489.B.01, KvK nr.NL0013.65.489.B.0130045450</div>
<div class="t" style="left:16.0px;top:691.4px;font-size:17.2px;color:#000;-webkit-text-stroke:0.6px #000;">Betalingsconditie: binnen 30 dagen, betalen voor: 2016-05-21</div></div>
</body></html>
